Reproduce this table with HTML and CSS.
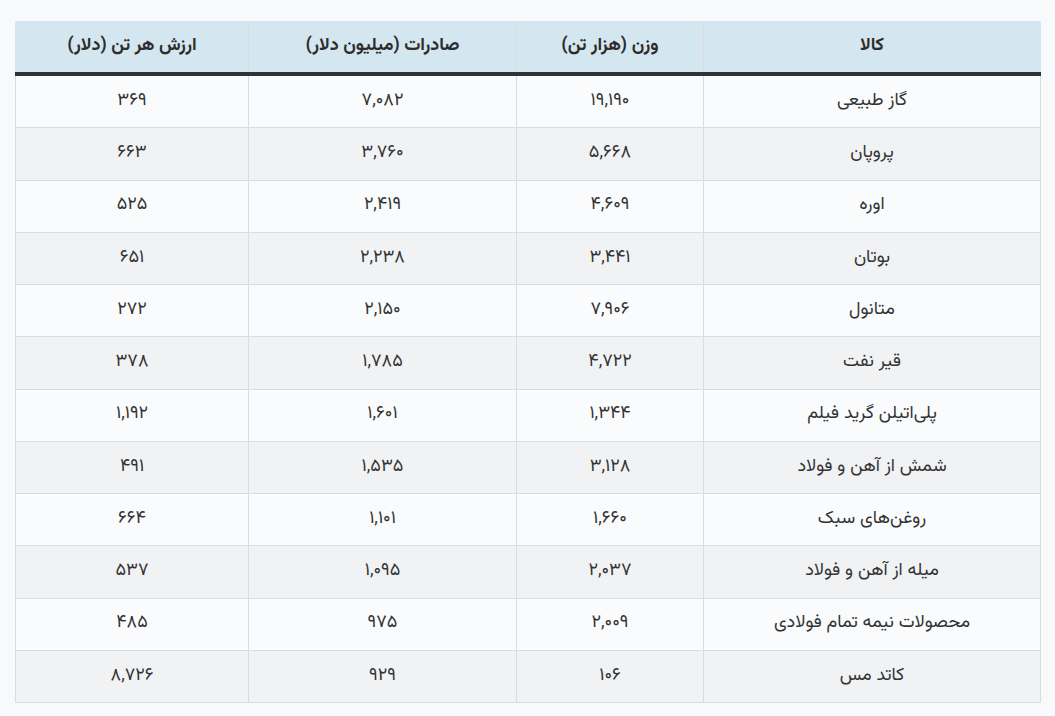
FILE: index.html
```html
<!DOCTYPE html>
<html lang="fa" dir="rtl">
<head>
<meta charset="utf-8">
<title>صادرات کالا</title>
<link rel="stylesheet" href="styles.css">
</head>
<body>
<div class="wrap">
<table class="data">
<colgroup>
<col class="c1"><col class="c2"><col class="c3"><col class="c4">
</colgroup>
<thead>
<tr><th>کالا</th><th>وزن (هزار تن)</th><th>صادرات (میلیون دلار)</th><th>ارزش هر تن (دلار)</th></tr>
</thead>
<tbody>
<tr><td>گاز طبیعی</td><td>۱۹,۱۹۰</td><td>۷,۰۸۲</td><td>۳۶۹</td></tr>
<tr><td>پروپان</td><td>۵,۶۶۸</td><td>۳,۷۶۰</td><td>۶۶۳</td></tr>
<tr><td>اوره</td><td>۴,۶۰۹</td><td>۲,۴۱۹</td><td>۵۲۵</td></tr>
<tr><td>بوتان</td><td>۳,۴۴۱</td><td>۲,۲۳۸</td><td>۶۵۱</td></tr>
<tr><td>متانول</td><td>۷,۹۰۶</td><td>۲,۱۵۰</td><td>۲۷۲</td></tr>
<tr><td>قیر نفت</td><td>۴,۷۲۲</td><td>۱,۷۸۵</td><td>۳۷۸</td></tr>
<tr><td>پلی‌اتیلن گرید فیلم</td><td>۱,۳۴۴</td><td>۱,۶۰۱</td><td>۱,۱۹۲</td></tr>
<tr><td>شمش از آهن و فولاد</td><td>۳,۱۲۸</td><td>۱,۵۳۵</td><td>۴۹۱</td></tr>
<tr><td>روغن‌های سبک</td><td>۱,۶۶۰</td><td>۱,۱۰۱</td><td>۶۶۴</td></tr>
<tr><td>میله از آهن و فولاد</td><td>۲,۰۳۷</td><td>۱,۰۹۵</td><td>۵۳۷</td></tr>
<tr><td>محصولات نیمه تمام فولادی</td><td>۲,۰۰۹</td><td>۹۷۵</td><td>۴۸۵</td></tr>
<tr><td>کاتد مس</td><td>۱۰۶</td><td>۹۲۹</td><td>۸,۷۲۶</td></tr>
</tbody>
</table>
</div>
</body>
</html>
```
FILE: styles.css
```css
html, body {
  margin: 0;
  padding: 0;
  background: #f8f9fa;
}
body {
  font-family: "Vazirmatn", "Noto Sans Arabic", "DejaVu Sans", sans-serif;
  color: #333;
}
.wrap {
  padding: 21px 14px 0 16px;
}
.data {
  width: 1025px;
  border-collapse: collapse;
  table-layout: fixed;
  font-size: 18px;
}
.c1 { width: 337px; }
.c2 { width: 187px; }
.c3 { width: 268px; }
.c4 { width: 233px; }
.data th, .data td {
  border: 1px solid #dcdcdc;
  text-align: center;
  vertical-align: middle;
  padding: 0 8px;
  line-height: 1.2;
}
.data th {
  background: #d4e6ef;
  height: 51px;
  font-weight: bold;
  color: #2d2d2d;
  border-top: none;
  border-bottom: 4px solid #2b353b;
}
.data thead tr th:first-child { border-right-color: #d4e6ef; }
.data thead tr th:last-child { border-left-color: #d4e6ef; }
.data td {
  height: 51.25px;
}
.data tbody tr:nth-child(odd) td { background: #fafbfc; }
.data tbody tr:nth-child(even) td { background: #f1f2f4; }
```
